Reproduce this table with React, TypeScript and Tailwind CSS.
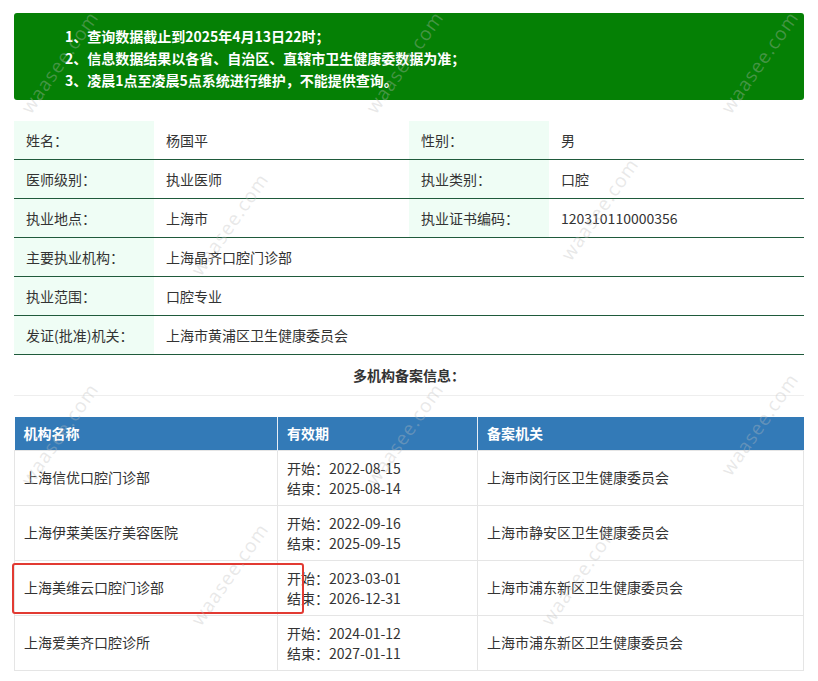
import React from "react";

interface InfoRow {
  label: string;
  value: string;
  label2?: string;
  value2?: string;
}

interface Filing {
  name: string;
  start: string;
  end: string;
  authority: string;
}

const notices = [
  "1、查询数据截止到2025年4月13日22时；",
  "2、信息数据结果以各省、自治区、直辖市卫生健康委数据为准；",
  "3、凌晨1点至凌晨5点系统进行维护，不能提供查询。",
];

const infoRows: InfoRow[] = [
  { label: "姓名：", value: "杨国平", label2: "性别：", value2: "男" },
  { label: "医师级别：", value: "执业医师", label2: "执业类别：", value2: "口腔" },
  { label: "执业地点：", value: "上海市", label2: "执业证书编码：", value2: "120310110000356" },
  { label: "主要执业机构：", value: "上海晶齐口腔门诊部" },
  { label: "执业范围：", value: "口腔专业" },
  { label: "发证(批准)机关：", value: "上海市黄浦区卫生健康委员会" },
];

const filings: Filing[] = [
  { name: "上海信优口腔门诊部", start: "2022-08-15", end: "2025-08-14", authority: "上海市闵行区卫生健康委员会" },
  { name: "上海伊莱美医疗美容医院", start: "2022-09-16", end: "2025-09-15", authority: "上海市静安区卫生健康委员会" },
  { name: "上海美维云口腔门诊部", start: "2023-03-01", end: "2026-12-31", authority: "上海市浦东新区卫生健康委员会" },
  { name: "上海爱美齐口腔诊所", start: "2024-01-12", end: "2027-01-11", authority: "上海市浦东新区卫生健康委员会" },
];

// 水印位置
const marks = [
  { left: 0, top: 48 },
  { left: 345, top: 48 },
  { left: 700, top: 48 },
  { left: 170, top: 210 },
  { left: 540, top: 195 },
  { left: 0, top: 420 },
  { left: 345, top: 420 },
  { left: 700, top: 410 },
  { left: 170, top: 560 },
  { left: 520, top: 560 },
];

const App: React.FC = () => {
  return (
    <div className="relative w-[818px] h-[681px] overflow-hidden bg-white px-[14px] pt-[13px] font-['Noto_Sans_CJK_SC','Noto_Sans',sans-serif] text-[14px] text-[#333]">
      {/* 提示 */}
      <div className="rounded-[3px] bg-[#058005] pl-[51px] pt-[12px] pb-[9px] text-white font-bold leading-[22px]">
        {notices.map((n) => (
          <div key={n}>{n}</div>
        ))}
      </div>

      {/* 医师信息 */}
      <div className="mt-[21px]">
        {infoRows.map((row) => (
          <div key={row.label} className="flex h-[39px] border-b border-[#1f5a3b]">
            <div className="w-[140px] shrink-0 bg-[#effdf5] px-3 flex items-center">{row.label}</div>
            {row.label2 ? (
              <>
                <div className="w-[255px] shrink-0 px-3 flex items-center">{row.value}</div>
                <div className="w-[140px] shrink-0 bg-[#effdf5] px-3 flex items-center">{row.label2}</div>
                <div className="flex-1 px-3 flex items-center">{row.value2}</div>
              </>
            ) : (
              <div className="flex-1 px-3 flex items-center">{row.value}</div>
            )}
          </div>
        ))}
      </div>

      <div className="h-[41px] flex items-center justify-center font-bold border-b border-[#eeeeee]">
        多机构备案信息：
      </div>

      {/* 备案表 */}
      <table className="mt-[21px] w-full table-fixed border-collapse">
        <colgroup>
          <col className="w-[263px]" />
          <col className="w-[200px]" />
          <col />
        </colgroup>
        <thead>
          <tr className="h-[33px] bg-[#337ab7] text-white font-bold text-left">
            <th className="px-[9px] font-bold border-r border-[#e6eef6]">机构名称</th>
            <th className="px-[9px] font-bold border-r border-[#e6eef6]">有效期</th>
            <th className="px-[9px] font-bold">备案机关</th>
          </tr>
        </thead>
        <tbody>
          {filings.map((f) => (
            <tr key={f.name} className="h-[55px]">
              <td className="border border-[#e5e5e5] px-[9px] align-middle">{f.name}</td>
              <td className="border border-[#e5e5e5] px-[9px] align-middle leading-[20px]">
                <div>开始：{f.start}</div>
                <div>结束：{f.end}</div>
              </td>
              <td className="border border-[#e5e5e5] px-[9px] align-middle">{f.authority}</td>
            </tr>
          ))}
        </tbody>
      </table>

      {/* 标注框 */}
      <div className="absolute left-[12px] top-[563px] w-[292px] h-[51px] rounded-[3px] border-[2px] border-[#e23a32] pointer-events-none" />

      {/* 水印 */}
      {marks.map((m, i) => (
        <div
          key={i}
          className="absolute pointer-events-none select-none -rotate-[55deg] text-[19px] tracking-[1px] text-[rgba(190,190,190,0.35)] font-['Open_Sans',sans-serif]"
          style={{ left: m.left, top: m.top }}
        >
          waasee.com
        </div>
      ))}
    </div>
  );
};

export default App;
